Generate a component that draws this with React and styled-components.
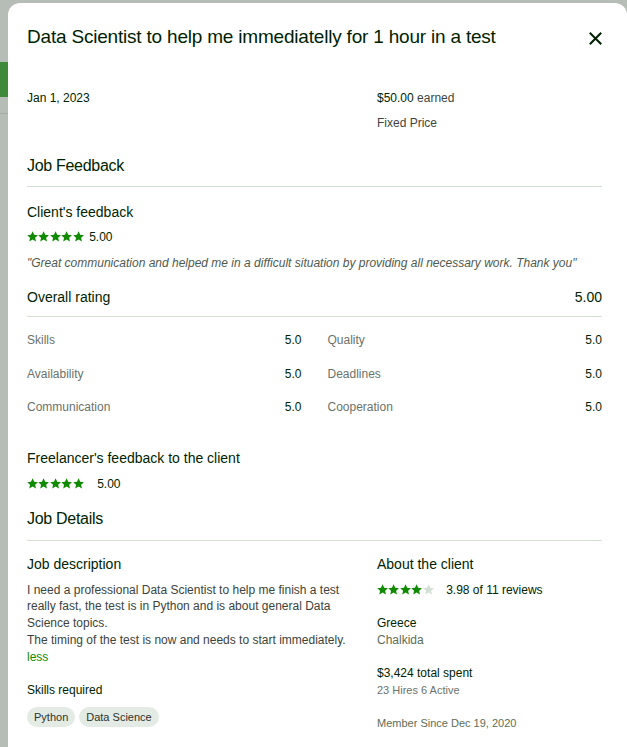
import React from "react";
import styled, { createGlobalStyle } from "styled-components";

const Global = createGlobalStyle`
  html, body { margin: 0; padding: 0; }
  body {
    background: #b6bcb6;
    font-family: "Liberation Sans", Arial, sans-serif;
    color: #001e00;
    overflow: hidden;
  }
  * { box-sizing: border-box; }
`;

const Page = styled.div`
  display: flex;
  height: 747px;
  overflow: hidden;
`;

const BackStrip = styled.div`
  width: 8px;
  flex: none;
  display: flex;
  flex-direction: column;
`;

const BackBar = styled.div`
  margin-top: ${(p) => p.$top}px;
  height: ${(p) => p.$h}px;
  background: ${(p) => p.$color};
`;

const Modal = styled.div`
  flex: 1;
  margin-top: 3px;
  background: #fff;
  border-radius: 12px 12px 0 0;
  padding: 20px 25px 0 19px;
  overflow: hidden;
`;

const Header = styled.header`
  display: flex;
  align-items: center;
  justify-content: space-between;
`;

const Title = styled.h2`
  margin: 0;
  font-size: 19px;
  line-height: 28px;
  font-weight: 400;
  letter-spacing: -0.2px;
  color: #001e00;
`;

const CloseButton = styled.button`
  border: 0;
  background: none;
  padding: 0;
  width: 14px;
  height: 14px;
  margin-top: 2px;
  display: flex;
  align-items: center;
  justify-content: center;
  color: #001e00;
  cursor: pointer;
`;

const TwoCol = styled.div`
  display: grid;
  grid-template-columns: 335px 1fr;
  column-gap: 15px;
  margin-top: ${(p) => p.$mt || 0}px;
`;

const Col = styled.div`
  display: flex;
  flex-direction: column;
`;

const Text = styled.div`
  font-size: ${(p) => p.$size || 12}px;
  line-height: ${(p) => p.$lh || 20}px;
  color: ${(p) => p.$color || "#001e00"};
  margin-top: ${(p) => p.$mt || 0}px;
`;

const Muted = styled.span`
  color: #3e453e;
`;

const SectionTitle = styled.h3`
  margin: ${(p) => p.$mt}px 0 0;
  font-size: 16px;
  line-height: 22px;
  font-weight: 400;
  letter-spacing: -0.3px;
  padding-bottom: ${(p) => p.$pb}px;
  border-bottom: 1px solid #d5e0d5;
  color: #001e00;
`;

const SubTitle = styled.h4`
  margin: ${(p) => p.$mt || 0}px 0 0;
  font-size: 14px;
  line-height: 20px;
  font-weight: 400;
  color: #001e00;
`;

const StarsRow = styled.div`
  display: flex;
  align-items: center;
  gap: ${(p) => p.$gap}px;
  margin-top: ${(p) => p.$mt}px;
  height: 20px;
  font-size: 12px;
  color: #001e00;
`;

const StarGroup = styled.div`
  display: flex;
  align-items: center;
  gap: 0.3px;
`;

const Quote = styled.p`
  margin: 6px 0 0;
  font-size: 12px;
  line-height: 20px;
  font-style: italic;
  color: #4f5a4f;
`;

const OverallRow = styled.div`
  display: flex;
  justify-content: space-between;
  align-items: center;
  margin-top: 14px;
  padding-bottom: 9px;
  border-bottom: 1px solid #d5e0d5;
  font-size: 14px;
  line-height: 20px;
`;

const RatingsGrid = styled.div`
  display: grid;
  grid-template-columns: 1fr 1fr;
  column-gap: 26px;
  row-gap: 13.5px;
  margin-top: 13px;
`;

const RatingItem = styled.div`
  display: flex;
  justify-content: space-between;
  font-size: 12px;
  line-height: 20px;
`;

const RatingLabel = styled.span`
  color: #6b726b;
`;

const RatingValue = styled.span`
  color: #001e00;
`;

const Description = styled.p`
  margin: 7.6px 0 0;
  font-size: 12px;
  line-height: 16.75px;
  color: #3c433c;
`;

const LessLink = styled.a`
  display: block;
  color: #108a00;
  text-decoration: none;
`;

const ChipRow = styled.div`
  display: flex;
  gap: 4px;
  margin-top: 7px;
`;

const Chip = styled.span`
  height: 20px;
  line-height: 20px;
  padding: 0 7px;
  border-radius: 10px;
  background: #e4ebe4;
  font-size: 11px;
  color: #2c332c;
`;

const Star = ({ filled }) => (
  <svg width="11.2" height="11.2" viewBox="2 2 20 20" aria-hidden="true">
    <path
      d="M12 2.6l2.85 6.2 6.75.7-5.05 4.55 1.45 6.65L12 17.3l-6 3.4 1.45-6.65L2.4 9.5l6.75-.7z"
      fill={filled ? "#108a00" : "#d5e0d5"}
    />
  </svg>
);

const Stars = ({ value }) => (
  <StarGroup>
    {[0, 1, 2, 3, 4].map((i) => (
      <Star key={i} filled={i < value} />
    ))}
  </StarGroup>
);

const ratings = [
  ["Skills", "5.0"],
  ["Quality", "5.0"],
  ["Availability", "5.0"],
  ["Deadlines", "5.0"],
  ["Communication", "5.0"],
  ["Cooperation", "5.0"],
];

export default function App() {
  return (
    <>
      <Global />
      <Page>
        <BackStrip>
          <BackBar $top={62} $h={35} $color="#3f8a3a" />
          <BackBar $top={16} $h={1} $color="#a4aaa4" />
        </BackStrip>
        <Modal>
          <Header>
            <Title>Data Scientist to help me immediatelly for 1 hour in a test</Title>
            <CloseButton aria-label="Close">
              <svg width="13" height="13" viewBox="0 0 13 13">
                <path d="M1.5 1.5l10 10M11.5 1.5l-10 10" stroke="currentColor" strokeWidth="2" strokeLinecap="square" />
              </svg>
            </CloseButton>
          </Header>

          <TwoCol $mt={37}>
            <Col>
              <Text>Jan 1, 2023</Text>
            </Col>
            <Col>
              <Text>
                $50.00 <Muted>earned</Muted>
              </Text>
              <Text $mt={5} $color="#3e453e">Fixed Price</Text>
            </Col>
          </TwoCol>

          <SectionTitle $mt={22} $pb={9}>Job Feedback</SectionTitle>

          <SubTitle $mt={15}>Client's feedback</SubTitle>
          <StarsRow $gap={5} $mt={5}>
            <Stars value={5} />
            <span>5.00</span>
          </StarsRow>
          <Quote>
            "Great communication and helped me in a difficult situation by providing all necessary work. Thank you"
          </Quote>

          <OverallRow>
            <span>Overall rating</span>
            <span>5.00</span>
          </OverallRow>

          <RatingsGrid>
            {ratings.map(([label, value]) => (
              <RatingItem key={label}>
                <RatingLabel>{label}</RatingLabel>
                <RatingValue>{value}</RatingValue>
              </RatingItem>
            ))}
          </RatingsGrid>

          <SubTitle $mt={31}>Freelancer's feedback to the client</SubTitle>
          <StarsRow $gap={13} $mt={6}>
            <Stars value={5} />
            <span>5.00</span>
          </StarsRow>

          <SectionTitle $mt={14} $pb={10}>Job Details</SectionTitle>

          <TwoCol $mt={13}>
            <Col>
              <SubTitle>Job description</SubTitle>
              <Description>
                I need a professional Data Scientist to help me finish a test really fast, the test is in Python and is about general Data Science topics.
                <br />
                The timing of the test is now and needs to start immediately.
                <LessLink href="#">less</LessLink>
              </Description>
              <Text $mt={14.6}>Skills required</Text>
              <ChipRow>
                <Chip>Python</Chip>
                <Chip>Data Science</Chip>
              </ChipRow>
            </Col>
            <Col>
              <SubTitle>About the client</SubTitle>
              <StarsRow $gap={12} $mt={6}>
                <Stars value={4} />
                <span>3.98 of 11 reviews</span>
              </StarsRow>
              <Text $mt={14.5} $lh={17}>Greece</Text>
              <Text $lh={17} $color="#5e6d55">Chalkida</Text>
              <Text $mt={16} $lh={17}>$3,424 total spent</Text>
              <Text $lh={17} $size={11} $color="#6b726b">23 Hires 6 Active</Text>
              <Text $mt={16} $lh={17} $size={11} $color="#5e6d55">Member Since Dec 19, 2020</Text>
            </Col>
          </TwoCol>
        </Modal>
      </Page>
    </>
  );
}
